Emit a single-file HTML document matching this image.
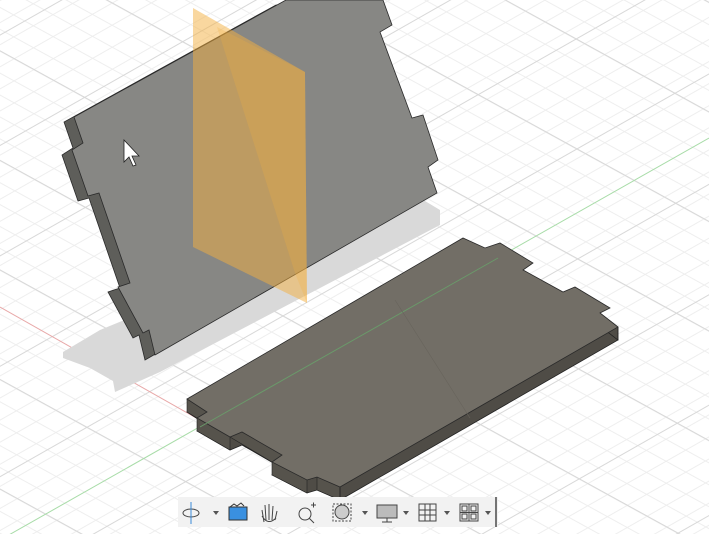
<!DOCTYPE html>
<html><head><meta charset="utf-8"><style>
html,body{margin:0;padding:0;width:709px;height:534px;overflow:hidden;background:#fff;font-family:"Liberation Sans",sans-serif}
svg{display:block}
</style></head><body>
<svg width="709" height="534" viewBox="0 0 709 534" xmlns="http://www.w3.org/2000/svg">
<defs>
<pattern id="gA" width="709" height="19.2" patternUnits="userSpaceOnUse" patternTransform="rotate(-29.6)">
<line x1="-2000" y1="0.5" x2="2000" y2="0.5" stroke="#eeeeee" stroke-width="1"/></pattern>
<pattern id="gB" width="709" height="19.2" patternUnits="userSpaceOnUse" patternTransform="rotate(28.8) translate(0,6)">
<line x1="-2000" y1="0.5" x2="2000" y2="0.5" stroke="#eeeeee" stroke-width="1"/></pattern>
<pattern id="gA2" width="709" height="96" patternUnits="userSpaceOnUse" patternTransform="rotate(-29.6) translate(0,30)">
<line x1="-2000" y1="0.5" x2="2000" y2="0.5" stroke="#d8d8d8" stroke-width="1"/></pattern>
<pattern id="gB2" width="709" height="96" patternUnits="userSpaceOnUse" patternTransform="rotate(28.8) translate(0,44)">
<line x1="-2000" y1="0.5" x2="2000" y2="0.5" stroke="#d8d8d8" stroke-width="1"/></pattern>
<polygon id="face" points="74,117 83,143 72,150 88,196 99,193 130,283 118,287 143,333 149,330 155,355 437,193 428,167 438,160 423,115 412,118 380,32 392,25 383,0 286,0"/>
<polygon id="ptop" points="187,399 463,238 485,248 500,243 533,263 523,270 563,292 575,287 610,308 600,313 618,327 340,487 317,477 307,480 272,462 282,455 242,432 230,437 197,418 207,412"/>
</defs>
<rect width="709" height="534" fill="#fff"/>
<rect width="709" height="534" fill="url(#gA)"/>
<rect width="709" height="534" fill="url(#gB)"/>
<rect width="709" height="534" fill="url(#gA2)"/>
<rect width="709" height="534" fill="url(#gB2)"/>
<line x1="0" y1="307" x2="320" y2="488" stroke="#e8a8a8" stroke-width="1"/>
<line x1="0" y1="540" x2="709" y2="138" stroke="#a8dca8" stroke-width="1"/>
<polygon points="63,352 100,330 420,198 440,210 440,225 160,372 115,392 113,381 90,368 63,358" fill="#d9d9d9"/>
<use href="#face" transform="translate(-10,5)" fill="#5e5e5a" stroke="#2a2a2a" stroke-width="0.8"/>
<use href="#face" fill="#878784" stroke="#2a2a2a" stroke-width="0.8"/>
<polygon points="193,8 305,72 307,303 193,247" fill="#f3b040" fill-opacity="0.5"/>
<polygon points="217,27 305,72 307,303 295,273" fill="#f3b040" fill-opacity="0.25"/>
<polygon points="124,140 124,162 129,157 133,166 136,165 132,156 139,156" fill="#fff" stroke="#222" stroke-width="0.8"/>
<!-- plate -->
<use href="#ptop" transform="translate(0,13)" fill="#4f4c46" stroke="#222" stroke-width="0.8"/>
<polygon points="600,313 618,327 618,340 600,326" fill="#4f4c46" stroke="#222" stroke-width="0.6"/>
<polygon points="523,270 563,292 563,305 523,283" fill="#4f4c46"/>
<polygon points="187,399 187,412 197,418 197,431 230,450 230,437 272,462 272,475 307,493 307,480 317,477 317,490 340,500 340,487" fill="#56534c" stroke="#222" stroke-width="0.6"/>
<line x1="340" y1="487" x2="340" y2="500" stroke="#222" stroke-width="0.8"/>
<line x1="618" y1="327" x2="618" y2="340" stroke="#222" stroke-width="0.8"/>
<use href="#ptop" fill="#726e66" stroke="#2a2a2a" stroke-width="0.8"/>
<line x1="200" y1="427" x2="498" y2="258" stroke="#6a9a6a" stroke-width="1"/>
<line x1="395" y1="300" x2="470" y2="418" stroke="#68645c" stroke-width="0.6"/>
<!-- toolbar -->
<rect x="178" y="497" width="320" height="30" fill="#f2f2f2"/>
<line x1="496" y1="497" x2="496" y2="527" stroke="#222" stroke-width="1.2"/>
<g fill="none" stroke="#444" stroke-width="1">
<ellipse cx="191" cy="513" rx="8" ry="4"/>
<line x1="191" y1="502" x2="191" y2="524" stroke="#3a8ad8"/>
<polygon points="213,511 219,511 216,515" fill="#555" stroke="none"/>
<path d="M230 507 l4 -3 l3 2 l4 -3 l3 3" stroke="#333"/>
<rect x="229" y="507" width="18" height="13" fill="#3a90e0" stroke="#333"/>
<path d="M264 522 L262 510 M266 520 L265 505 M269 520 L269 504 M272 520 L273 506 M275 520 L277 511 M262 516 Q268 526 276 518"/>
<circle cx="305" cy="514" r="6"/>
<line x1="309" y1="518" x2="314" y2="523"/>
<path d="M311 505 h5 M313.5 502.5 v5"/>
<rect x="333" y="504" width="18" height="17" stroke-dasharray="2 1.5"/>
<circle cx="342" cy="512" r="7" fill="#ccc"/>
<polygon points="362,511 368,511 365,515" fill="#555" stroke="none"/>
<rect x="377" y="505" width="20" height="13" fill="#bbb"/>
<line x1="387" y1="518" x2="387" y2="522"/><line x1="382" y1="522" x2="392" y2="522"/>
<polygon points="403,511 409,511 406,515" fill="#555" stroke="none"/>
<rect x="419" y="504" width="17" height="17"/>
<path d="M425 504 v17 M430 504 v17 M419 510 h17 M419 515 h17"/>
<polygon points="444,511 450,511 447,515" fill="#555" stroke="none"/>
<rect x="460" y="504" width="18" height="17"/>
<path d="M469 504 v17 M460 512.5 h18"/>
<rect x="462" y="506" width="5" height="5"/><rect x="471" y="506" width="5" height="5"/><rect x="462" y="514" width="5" height="5"/><rect x="471" y="514" width="5" height="5"/>
<polygon points="485,511 491,511 488,515" fill="#555" stroke="none"/>
</g>
</svg>
</body></html>
